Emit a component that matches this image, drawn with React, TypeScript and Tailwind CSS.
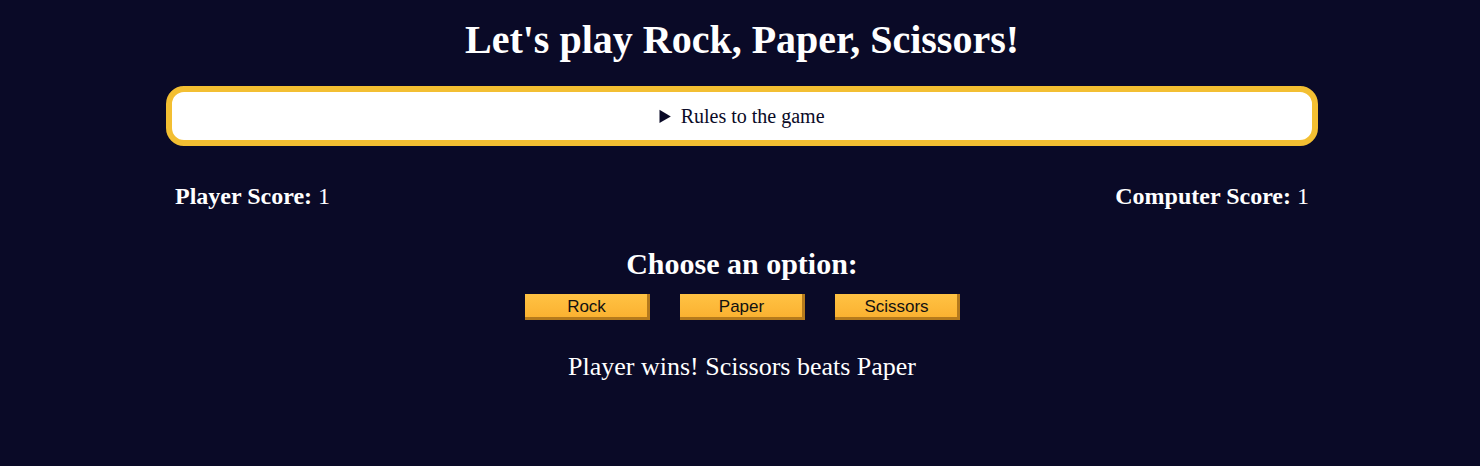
import { FC } from "react";

const options = ["Rock", "Paper", "Scissors"];

const App: FC = () => {
  return (
    <div className="min-h-[466px] w-full bg-[#0a0a27] pl-[4px] font-['Liberation_Serif',serif] text-white">
      <div className="mx-auto flex w-[1152px] flex-col items-center pt-[16px]">
        <h1 className="text-[40px] font-bold leading-[48px]">
          Let's play Rock, Paper, Scissors!
        </h1>
        <details className="mt-[22px] w-full rounded-[18px] border-[6px] border-[#f3bf32] bg-white text-[#0a0a27]">
          <summary className="cursor-pointer py-[14px] text-center text-[20px] leading-[20px]">
            Rules to the game
          </summary>
        </details>
        <div className="mt-[37px] flex w-full justify-between px-[9px] text-[24px] leading-[26px]">
          <p>
            <b>Player Score:</b> 1
          </p>
          <p>
            <b>Computer Score:</b> 1
          </p>
        </div>
        <h2 className="mt-[38px] text-[30px] font-bold leading-[34px]">
          Choose an option:
        </h2>
        <div className="mt-[13px] flex gap-[30px]">
          {options.map((option) => (
            <button
              key={option}
              className="h-[26px] w-[125px] border-b-[3px] border-r-[3px] border-[#b57a1c] bg-gradient-to-b from-[#ffc243] to-[#fbb231] pl-[2px] pt-[2px] font-['Liberation_Sans',sans-serif] text-[17px] leading-[20px] text-[#111]"
            >
              {option}
            </button>
          ))}
        </div>
        <p className="mt-[32px] text-[26px] leading-[30px]">
          Player wins! Scissors beats Paper
        </p>
      </div>
    </div>
  );
};

export default App;
